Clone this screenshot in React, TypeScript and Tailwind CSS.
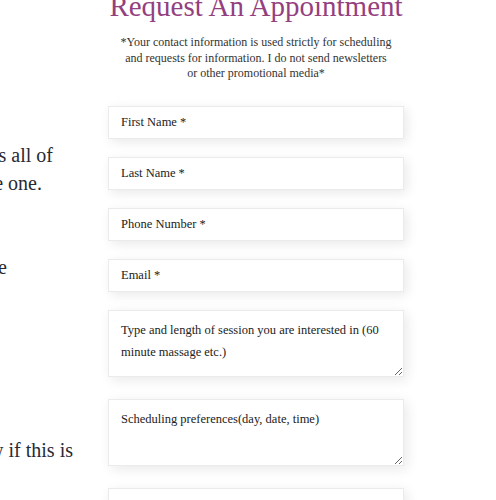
import React from "react";

const serif = "font-['Liberation_Serif','Times_New_Roman',serif]";

// left-hand copy: only the tail of each line shows, so each line is pinned by its right edge
const leftLines: { text: string; end: string; gap?: string }[] = [
  { text: "Every session is tailored and includes all of", end: "w-[53px]" },
  { text: "the techniques you need, in just the one.", end: "w-[42px]" },
  { text: "", end: "w-[0px]" },
  { text: "", end: "w-[0px]" },
  { text: "Please allow time to arrive and settle before", end: "w-[7px]" },
  { text: "Call first and let me know if this is", end: "w-[73px]", gap: "mt-[155px]" },
];

const fieldBox =
  "block w-full bg-white border border-[#ebebeb] shadow-[3px_3px_12px_rgba(0,0,0,0.09)] px-[12px] text-[#222] placeholder:text-[#222] outline-none";

export default function App() {
  return (
    <div className={`w-[496px] h-[500px] overflow-hidden bg-white flex ${serif}`}>
      {/* Left column (mostly off screen) */}
      <div className="w-[108px] shrink-0 pt-[141px] text-[20px] leading-[28px] text-[#262a36]">
        {leftLines.map((l, i) => (
          <div key={i} className={`flex justify-end h-[28px] ${l.end} ${l.gap ?? ""}`}>
            <span className="whitespace-nowrap">{l.text}</span>
          </div>
        ))}
      </div>

      {/* Form column */}
      <div className="w-[296px] shrink-0 flex flex-col">
        <h2 className="mt-[-11px] text-center text-[29px] leading-[35px] text-[#943f80]">
          Request An Appointment
        </h2>
        <p className="mt-[11px] text-center text-[12px] leading-[15.5px] text-[#333]">
          *Your contact information is used strictly for scheduling
          <br />
          and requests for information. I do not send newsletters
          <br />
          or other promotional media*
        </p>

        <form className="mt-[24.5px] flex flex-col">
          <input className={`${fieldBox} h-[33px] text-[12.5px]`} placeholder="First Name *" />
          <input className={`${fieldBox} mt-[18px] h-[33px] text-[12.5px]`} placeholder="Last Name *" />
          <input className={`${fieldBox} mt-[18px] h-[33px] text-[12.5px]`} placeholder="Phone Number *" />
          <input className={`${fieldBox} mt-[18px] h-[33px] text-[12.5px]`} placeholder="Email *" />
          <textarea
            className={`${fieldBox} mt-[18px] h-[67px] pt-[8px] text-[12.5px] leading-[22px]`}
            placeholder="Type and length of session you are interested in (60 minute massage etc.)"
          />
          <textarea
            className={`${fieldBox} mt-[22px] h-[67px] pt-[8px] text-[12.5px] leading-[22px]`}
            placeholder="Scheduling preferences(day, date, time)"
          />
          <textarea
            className={`${fieldBox} mt-[22px] h-[67px] pt-[8px] text-[12.5px] leading-[22px]`}
            placeholder="Questions or comments"
          />
        </form>
      </div>
    </div>
  );
}
